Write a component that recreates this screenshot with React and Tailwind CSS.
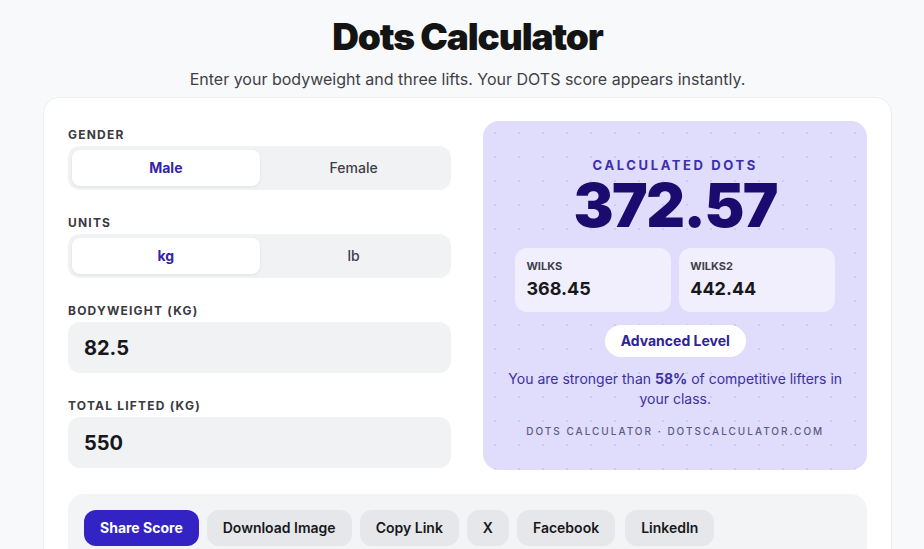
import React, { useState } from "react";

const SHARE = ["Download Image", "Copy Link", "X", "Facebook"];

const Toggle = ({ options, value, onChange }) => (
  <div className="flex rounded-xl bg-[#f1f2f4] p-1">
    {options.map((opt) => (
      <button
        key={opt}
        onClick={() => onChange(opt)}
        className={
          opt === value
            ? "h-9 flex-1 rounded-lg bg-white text-sm font-bold text-[#3424a6] shadow-[0_1px_3px_rgba(0,0,0,0.08)]"
            : "h-9 flex-1 rounded-lg text-sm font-medium text-[#3f3f46]"
        }
      >
        {opt}
      </button>
    ))}
  </div>
);

const Label = ({ children }) => (
  <div className="mb-[3px] text-xs leading-4 font-bold tracking-[0.1em] text-[#3a3a40] uppercase">
    {children}
  </div>
);

export default function App() {
  const [gender, setGender] = useState("Male");
  const [unit, setUnit] = useState("kg");
  const [bodyweight, setBodyweight] = useState("82.5");
  const [total, setTotal] = useState("550");

  return (
    <div className="min-h-screen bg-[#f8f9fb] font-['Inter',sans-serif] text-[#18181b]">
      <div className="ml-[43px] w-[849px] pt-[15px]">
        <h1 className="text-center text-[37px] leading-[44px] font-black tracking-[-0.03em] text-[#141414]">
          Dots Calculator
        </h1>
        <p className="mt-[8px] text-center text-base leading-6 text-[#3f3f46]">
          Enter your bodyweight and three lifts. Your DOTS score appears instantly.
        </p>

        <div className="mt-[6px] rounded-2xl border border-[#eceef1] bg-white px-6 pt-[23px] pb-6">
          <div className="flex gap-8">
            <div className="flex w-[384px] flex-col gap-[25px] pt-[6px]">
              <div>
                <Label>Gender</Label>
                <Toggle options={["Male", "Female"]} value={gender} onChange={setGender} />
              </div>
              <div>
                <Label>Units</Label>
                <Toggle options={["kg", "lb"]} value={unit} onChange={setUnit} />
              </div>
              <div>
                <Label>Bodyweight ({unit})</Label>
                <input
                  value={bodyweight}
                  onChange={(e) => setBodyweight(e.target.value)}
                  className="h-[51px] w-full rounded-xl bg-[#f1f2f4] px-4 text-xl font-bold text-[#18181b] outline-none"
                />
              </div>
              <div>
                <Label>Total Lifted ({unit})</Label>
                <input
                  value={total}
                  onChange={(e) => setTotal(e.target.value)}
                  className="h-[51px] w-full rounded-xl bg-[#f1f2f4] px-4 text-xl font-bold text-[#18181b] outline-none"
                />
              </div>
            </div>

            <div className="flex w-[384px] flex-col items-center rounded-2xl bg-[#e0dcfb] bg-[radial-gradient(circle,#d0caf3_1px,transparent_1.5px)] px-8 pt-9 pb-[31px] [background-size:24px_24px]">
              <div className="text-[13px] leading-4 font-bold tracking-[0.2em] text-[#3b2fae]">
                CALCULATED DOTS
              </div>
              <div className="-mt-[2px] text-[60px] leading-[68px] font-black tracking-[-0.025em] text-[#1c0b6e]">
                372.57
              </div>
              <div className="mt-[9px] grid w-full grid-cols-2 gap-2">
                <div className="rounded-xl bg-[#f1effd] px-[11px] pt-[10px] pb-[11px]">
                  <div className="text-[11px] leading-4 font-bold text-[#3f3f4a]">WILKS</div>
                  <div className="mt-[3px] text-lg leading-6 font-bold text-[#18181b]">368.45</div>
                </div>
                <div className="rounded-xl bg-[#f1effd] px-[11px] pt-[10px] pb-[11px]">
                  <div className="text-[11px] leading-4 font-bold text-[#3f3f4a]">WILKS2</div>
                  <div className="mt-[3px] text-lg leading-6 font-bold text-[#18181b]">442.44</div>
                </div>
              </div>
              <div className="mt-[13px] flex h-8 items-center rounded-full bg-white px-4 text-sm font-bold text-[#2e2394]">
                Advanced Level
              </div>
              <p className="-mx-4 mt-3 text-center text-sm leading-5 text-[#3b32a0]">
                You are stronger than <span className="font-bold">58%</span> of competitive lifters in your class.
              </p>
              <div className="mt-[14px] text-[10px] leading-4 font-medium tracking-[0.2em] text-[#5a5a86]">
                DOTS CALCULATOR · DOTSCALCULATOR.COM
              </div>
            </div>
          </div>

          <div className="mt-6 flex gap-2 rounded-2xl bg-[#f3f4f6] p-4">
            <button className="h-9 rounded-xl bg-[#3423c4] px-4 text-sm font-bold text-white">
              Share Score
            </button>
            {SHARE.map((s) => (
              <button
                key={s}
                className="h-9 rounded-xl bg-[#e6e7ea] px-4 text-sm font-semibold text-[#18181b]"
              >
                {s}
              </button>
            ))}
            <button className="ml-[2px] h-9 rounded-xl bg-[#e6e7ea] px-4 text-sm font-semibold text-[#18181b]">
              LinkedIn
            </button>
          </div>
        </div>
      </div>
    </div>
  );
}
